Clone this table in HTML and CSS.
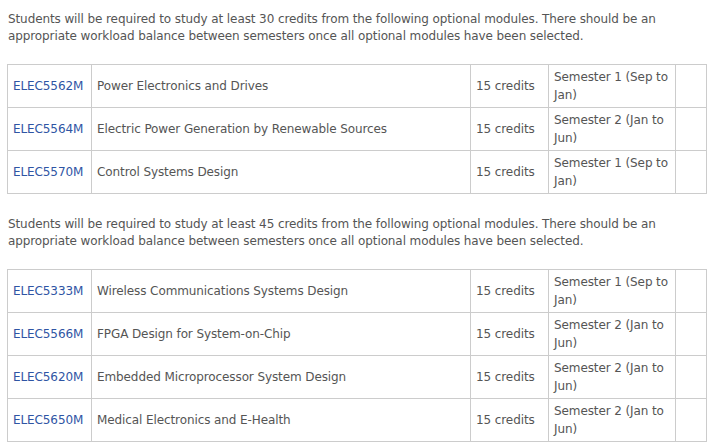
FILE: index.html
```html
<!DOCTYPE html>
<html>
<head>
<meta charset="utf-8">
<link rel="stylesheet" href="styles.css">
</head>
<body>
<div class="page">
  <p class="intro">Students will be required to study at least 30 credits from the following optional modules. There should be an appropriate workload balance between semesters once all optional modules have been selected.</p>
  <table class="modules">
    <colgroup><col class="c-code"><col class="c-name"><col class="c-cred"><col class="c-sem"><col class="c-extra"></colgroup>
    <tr><td><a href="#">ELEC5562M</a></td><td>Power Electronics and Drives</td><td>15 credits</td><td>Semester 1 (Sep to Jan)</td><td></td></tr>
    <tr><td><a href="#">ELEC5564M</a></td><td>Electric Power Generation by Renewable Sources</td><td>15 credits</td><td>Semester 2 (Jan to Jun)</td><td></td></tr>
    <tr><td><a href="#">ELEC5570M</a></td><td>Control Systems Design</td><td>15 credits</td><td>Semester 1 (Sep to Jan)</td><td></td></tr>
  </table>
  <p class="intro">Students will be required to study at least 45 credits from the following optional modules. There should be an appropriate workload balance between semesters once all optional modules have been selected.</p>
  <table class="modules">
    <colgroup><col class="c-code"><col class="c-name"><col class="c-cred"><col class="c-sem"><col class="c-extra"></colgroup>
    <tr><td><a href="#">ELEC5333M</a></td><td>Wireless Communications Systems Design</td><td>15 credits</td><td>Semester 1 (Sep to Jan)</td><td></td></tr>
    <tr><td><a href="#">ELEC5566M</a></td><td>FPGA Design for System-on-Chip</td><td>15 credits</td><td>Semester 2 (Jan to Jun)</td><td></td></tr>
    <tr><td><a href="#">ELEC5620M</a></td><td>Embedded Microprocessor System Design</td><td>15 credits</td><td>Semester 2 (Jan to Jun)</td><td></td></tr>
    <tr><td><a href="#">ELEC5650M</a></td><td>Medical Electronics and E-Health</td><td>15 credits</td><td>Semester 2 (Jan to Jun)</td><td></td></tr>
  </table>
</div>
</body>
</html>
```
FILE: styles.css
```css
html, body {
  margin: 0;
  padding: 0;
  background: #fff;
}
.page {
  padding: 11px 7px 0 7px;
  font-family: "DejaVu Sans", Verdana, sans-serif;
  font-size: 12px;
  letter-spacing: -0.1px;
  color: #555;
  line-height: 17px;
}
.intro {
  margin: 0 0 19px 1px;
}
.modules {
  border-collapse: collapse;
  table-layout: fixed;
  width: 699px;
  margin-bottom: 22px;
}
.c-code { width: 84px; }
.c-name { width: 379px; }
.c-cred { width: 78px; }
.c-sem { width: 127px; }
.c-extra { width: 31px; }
.modules td {
  border: 1px solid #cccccc;
  padding: 3px 3px 3px 5px;
  height: 36px;
  line-height: 18px;
  vertical-align: middle;
}
.modules a {
  color: #2f55a4;
  text-decoration: none;
}
```
